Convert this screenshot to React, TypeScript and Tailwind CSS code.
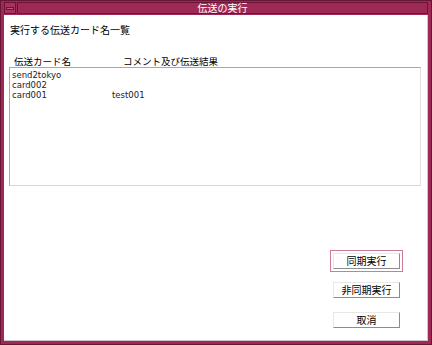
const jp = { fontFamily: '"Noto Sans CJK JP", "DejaVu Sans", sans-serif' };
const list = { fontFamily: '"DejaVu Sans", "Liberation Sans", sans-serif' };

const rows = [
  { name: 'send2tokyo', comment: '' },
  { name: 'card002', comment: '' },
  { name: 'card001', comment: 'test001' },
];

const Btn = ({ label }: { label: string }) => (
  <button
    style={jp}
    className="w-[67px] h-[16px] bg-white border border-t-[#e8e8e8] border-l-[#e8e8e8] border-r-[#8c8c8c] border-b-[#8c8c8c] text-[10px] leading-none text-black flex items-center justify-center"
  >
    {label}
  </button>
);

export default function App() {
  return (
    <div className="w-[432px] h-[345px] bg-[#9c2a55] border border-[#6a1537] flex flex-col px-[3px] pb-[3px]">
      {/* Title bar */}
      <div className="h-[14px] flex items-stretch pt-[1px]">
        <div className="w-[12px] h-[12px] border border-[#6a1537] bg-[#a8335f] flex items-center justify-center">
          <div className="w-[8px] h-[3px] bg-[#c6507c] border border-[#6a1537]" />
        </div>
        <div
          style={jp}
          className="flex-1 h-[12px] ml-[1px] border border-[#6a1537] text-white text-[10px] leading-[10px] flex items-center justify-center"
        >
          伝送の実行
        </div>
      </div>

      {/* Content */}
      <div className="flex-1 bg-white border-r border-b border-[#c8c8c8] flex flex-col">
        <div style={jp} className="ml-[6px] mt-[9px] text-[10px] leading-[12px] text-black">
          実行する伝送カード名一覧
        </div>

        <div style={jp} className="flex mt-[19px] h-[12px] text-[9.5px] leading-[12px] text-black">
          <span className="ml-[10px] w-[109px]">伝送カード名</span>
          <span>コメント及び伝送結果</span>
        </div>

        <div className="ml-[5px] w-[412px] h-[119px] border border-[#a8a8a8] border-r-[#e0e0e0] border-b-[#d8d8d8] pt-[2px] pl-[2px]">
          {rows.map((r) => (
            <div key={r.name} style={list} className="flex h-[10px] text-[8.5px] leading-[10px] text-[#222]">
              <span className="w-[100px]">{r.name}</span>
              <span>{r.comment}</span>
            </div>
          ))}
        </div>

        <div className="flex flex-col items-end mr-[27px] mt-[64px]">
          <div className="-mr-[3px] p-[2px] border border-[#d07a9a]">
            <Btn label="同期実行" />
          </div>
          <div className="mt-[10px]">
            <Btn label="非同期実行" />
          </div>
          <div className="mt-[14px]">
            <Btn label="取消" />
          </div>
        </div>
      </div>
    </div>
  );
}
